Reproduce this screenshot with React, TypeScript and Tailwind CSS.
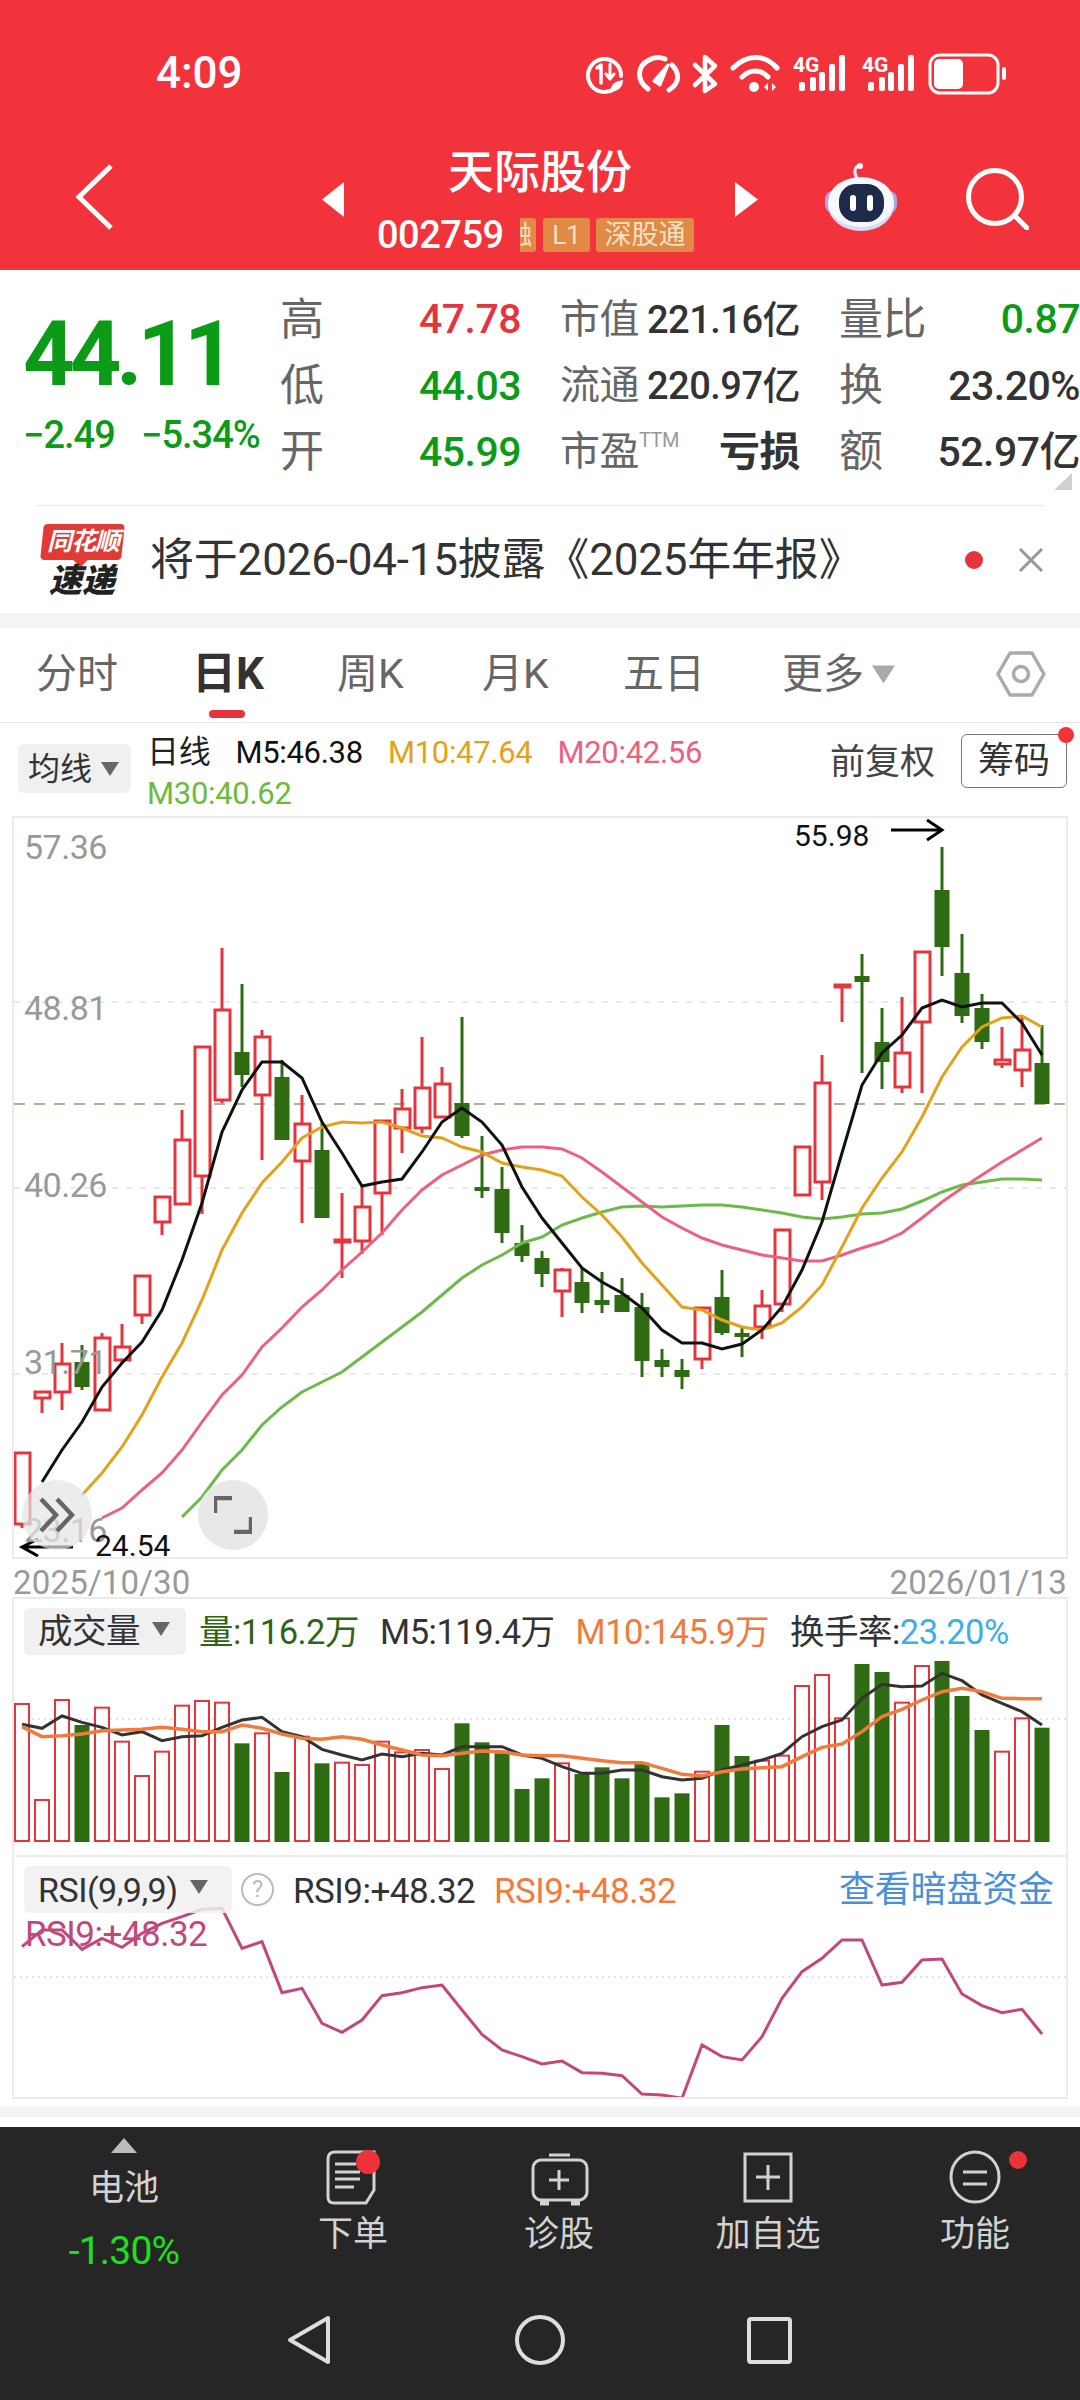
import React from "react";

const RED = "#e5343d";
const GREEN = "#2e6b13";

// [up?, wickTop, bodyTop, bodyBottom, wickBottom]
const candles: [number, number, number, number, number][] = [
  [1, 1453, 1453, 1524, 1528], [1, 1392, 1392, 1398, 1413], [1, 1343, 1364, 1392, 1410], [0, 1345, 1362, 1387, 1390],
  [1, 1333, 1338, 1410, 1410], [1, 1324, 1347, 1360, 1363], [1, 1276, 1276, 1315, 1324], [1, 1197, 1197, 1222, 1235],
  [1, 1110, 1140, 1204, 1204], [1, 1047, 1047, 1176, 1214], [1, 948, 1010, 1100, 1103], [0, 984, 1052, 1075, 1087],
  [1, 1030, 1037, 1095, 1160], [0, 1060, 1077, 1140, 1140], [1, 1095, 1124, 1161, 1223], [0, 1123, 1150, 1218, 1218],
  [1, 1193, 1240, 1242, 1278], [1, 1185, 1207, 1241, 1254], [1, 1121, 1121, 1193, 1235], [1, 1089, 1109, 1128, 1153],
  [1, 1037, 1088, 1128, 1133], [1, 1067, 1084, 1117, 1117], [0, 1017, 1103, 1136, 1138], [0, 1136, 1187, 1191, 1198],
  [0, 1167, 1189, 1233, 1243], [0, 1225, 1243, 1256, 1262], [0, 1251, 1258, 1274, 1287], [1, 1268, 1270, 1291, 1317],
  [0, 1268, 1282, 1303, 1313], [0, 1272, 1300, 1305, 1313], [0, 1278, 1295, 1312, 1312], [0, 1293, 1307, 1361, 1377],
  [0, 1349, 1360, 1367, 1377], [0, 1359, 1370, 1377, 1389], [1, 1308, 1308, 1359, 1369], [0, 1270, 1297, 1333, 1335],
  [0, 1328, 1333, 1337, 1357], [1, 1290, 1306, 1327, 1339], [1, 1230, 1230, 1304, 1312], [1, 1147, 1147, 1195, 1195],
  [1, 1055, 1083, 1182, 1200], [1, 985, 985, 987, 1022], [0, 954, 976, 982, 1073], [0, 1008, 1042, 1062, 1089],
  [1, 997, 1053, 1087, 1093], [1, 952, 952, 1022, 1093], [0, 847, 890, 947, 976], [0, 934, 973, 1016, 1023],
  [0, 994, 1008, 1042, 1049], [1, 1027, 1060, 1064, 1068], [1, 1015, 1050, 1070, 1087], [0, 1025, 1063, 1104, 1104],
];

const ma5 = [1482, 1450, 1422, 1387, 1363, 1342, 1310, 1260, 1203, 1132, 1090, 1062, 1062, 1078, 1122, 1153, 1186, 1182, 1179, 1152, 1122, 1108, 1122, 1145, 1187, 1218, 1243, 1268, 1282, 1293, 1308, 1330, 1343, 1343, 1349, 1344, 1330, 1307, 1270, 1222, 1153, 1085, 1053, 1035, 1008, 1000, 1007, 1003, 1003, 1023, 1055];
const ma10 = [1495, 1473, 1447, 1415, 1377, 1343, 1300, 1250, 1213, 1183, 1162, 1138, 1127, 1122, 1123, 1122, 1128, 1136, 1138, 1147, 1152, 1163, 1167, 1170, 1176, 1197, 1215, 1237, 1263, 1285, 1307, 1310, 1320, 1327, 1330, 1323, 1307, 1285, 1247, 1208, 1178, 1152, 1117, 1077, 1047, 1027, 1018, 1016, 1027];
const ma20 = [1518, 1508, 1490, 1473, 1450, 1422, 1395, 1375, 1347, 1328, 1307, 1290, 1270, 1252, 1233, 1210, 1190, 1175, 1165, 1155, 1150, 1147, 1147, 1149, 1158, 1172, 1187, 1202, 1217, 1228, 1238, 1245, 1250, 1255, 1258, 1261, 1261, 1255, 1248, 1242, 1233, 1218, 1202, 1188, 1175, 1162, 1150, 1138];
const ma30 = [1517, 1497, 1470, 1450, 1425, 1407, 1392, 1382, 1372, 1357, 1342, 1327, 1312, 1295, 1278, 1265, 1255, 1243, 1237, 1225, 1218, 1212, 1207, 1206, 1207, 1206, 1205, 1205, 1207, 1210, 1213, 1217, 1219, 1217, 1214, 1213, 1209, 1201, 1192, 1185, 1182, 1179, 1179, 1180];

// volume tops, measured on the crop (y = 1590 + v / 3), sign says up or down bar
const volumes = [342, 630, 330, -405, 353, 455, 558, 485, 347, 333, 338, -460, 430, -546, 440, -520, 518, 525, 455, 487, 480, 537, -400, -457, -490, -597, -565, 520, -552, -532, -565, -518, -622, -610, 545, -405, -498, 512, 497, 288, 255, 385, -222, -246, 338, 228, -213, -318, -420, 485, 385, -413];
const volM5 = [403, 415, 378, 397, 412, 435, 425, 452, 440, 437, 412, 390, 382, 425, 440, 478, 495, 510, 492, 500, 490, 495, 470, 470, 470, 495, 505, 530, 550, 550, 540, 540, 560, 570, 565, 540, 525, 510, 490, 440, 410, 390, 325, 283, 290, 288, 250, 272, 315, 340, 365, 405];
const volM10 = [410, 440, 437, 432, 422, 420, 418, 412, 418, 425, 425, 405, 415, 432, 445, 448, 440, 448, 465, 480, 495, 497, 490, 483, 485, 495, 497, 497, 505, 512, 518, 518, 535, 553, 558, 545, 537, 533, 530, 500, 472, 462, 425, 380, 358, 330, 305, 295, 305, 325, 326, 326];
const rsi = [290, 240, 240, 298, 265, 292, 250, 220, 200, 178, 175, 295, 275, 428, 415, 520, 547, 510, 437, 428, 413, 405, 480, 553, 600, 620, 642, 633, 668, 670, 677, 732, 735, 745, 585, 620, 630, 560, 445, 365, 325, 270, 270, 405, 397, 330, 327, 432, 467, 488, 478, 552];

const line = (start: number, ys: number[]) => ys.map((y, i) => `${22 + (start + i) * 20},${y}`).join(" ");

const Triangle = ({ className }: { className: string }) => (
  <svg viewBox="0 0 18 14" className={className}>
    <path d="M0 0H18L9 14Z" fill="currentColor" />
  </svg>
);

const StatusIcons = () => (
  <svg width={430} height={46} viewBox="580 50 430 46" fill="none" stroke="#fff" strokeLinecap="round" strokeLinejoin="round">
    {/* data saver */}
    <path d="M614 89A16.5 16.5 0 1 1 621 76" strokeWidth={4} />
    <path d="M597 68L601 65V83" strokeWidth={3.5} />
    <path d="M610 64V78M606 74L610 79L614 74" strokeWidth={3} />
    <path d="M611 91C610 84 616 81 623 80C623 87 618 92 611 91Z" fill="#fff" stroke="none" />
    {/* speed */}
    <path d="M648 89C636 80 637 66 649 60C654 57 660 57 665 59" strokeWidth={5} />
    <path d="M672 65C680 73 680 83 669 90" strokeWidth={5} />
    <path d="M654 81L668 65L660 85Z" fill="#fff" strokeWidth={3} />
    {/* bluetooth */}
    <path d="M695 65L715 84L705 91V57L715 66L695 85" strokeWidth={4.5} />
    {/* wifi */}
    <path d="M733 68C747 54 765 54 777 68" strokeWidth={5} />
    <path d="M742 77C750 69 761 69 768 77" strokeWidth={5} />
    <circle cx={754} cy={87} r={5} fill="#fff" stroke="none" />
    <path d="M768 83V91L764 87ZM772 83V91L776 87Z" fill="#fff" stroke="none" />
    {/* signal */}
    {[0, 69].map((dx) => (
      <g key={dx}>
        <text x={793 + dx} y={72} fontSize={21} fontWeight={700} fill="#fff" stroke="none" fontFamily="Roboto">4G</text>
        {[[802, 82], [813, 77], [822, 72], [832, 64], [842, 55]].map(([x, top]) => (
          <rect key={x} x={x - 3 + dx} y={top} width={6} height={91 - top} rx={2} fill="#fff" stroke="none" />
        ))}
      </g>
    ))}
    {/* battery */}
    <rect x={930} y={55} width={68} height={38} rx={10} strokeWidth={3} />
    <rect x={934} y={59} width={29} height={30} rx={5} fill="#fff" stroke="none" />
    <rect x={1002} y={67} width={4} height={13} rx={2} fill="#fff" stroke="none" />
  </svg>
);

const Robot = () => (
  <svg width={72} height={68} viewBox="825 163 72 68">
    <path d="M857 178C853 172 855 166 860 165" fill="none" stroke="#e8e6fb" strokeWidth={3} />
    <circle cx={860} cy={166} r={3} fill="#fff" />
    <rect x={825} y={191} width={72} height={22} rx={8} fill="#a9a6e4" />
    <ellipse cx={861} cy={205} rx={33} ry={26} fill="#d9d8f6" />
    <ellipse cx={861} cy={202} rx={33} ry={25} fill="#f7f7ff" />
    <rect x={839} y={184} width={45} height={38} rx={17} fill="#1d2a49" />
    <rect x={850} y={195} width={6} height={16} rx={3} fill="#fff" />
    <rect x={867} y={195} width={6} height={16} rx={3} fill="#fff" />
  </svg>
);

const App = () => {
  return (
    <div className="w-[1080px] h-[2400px] overflow-hidden bg-white text-[#333] [font-family:Roboto,'Noto_Sans_CJK_SC',sans-serif]">
      {/* red header */}
      <header className="h-[270px] bg-[#f3333c] text-white border-b border-[#d8434a]">
        <div className="h-[146px] flex items-center">
          <span className="ml-[156px] w-[424px] text-[44px] font-medium leading-none">4:09</span>
          <StatusIcons />
        </div>
        <div className="flex items-start">
          <svg width={40} height={70} viewBox="75 163 40 70" className="ml-[75px] mt-[17px]" fill="none" stroke="#fff" strokeWidth={5}>
            <path d="M111 166L79 197L111 228" />
          </svg>
          <svg width={22} height={35} viewBox="0 0 22 35" className="ml-[207px] mt-[36px]">
            <path d="M22 0V35L0 17.5Z" fill="#fff" />
          </svg>
          <div className="ml-[33px] w-[318px]">
            <div className="pl-[8px] mt-[1px] text-center text-[46px] leading-[50px] font-medium">天际股份</div>
            <div className="mt-[21px] flex items-center h-[34px]">
              <span className="text-[38px] leading-none font-medium w-[129px] tracking-[-0.5px]">002759</span>
              <span className="ml-[14px] w-[16px] h-[34px] overflow-hidden rounded-r-[3px] bg-[#e08a45] text-[#f7e0c5] text-[26px] leading-[34px]">
                <span className="block -ml-[14px]">融</span>
              </span>
              <span className="ml-[7px] w-[47px] h-[34px] rounded-[3px] bg-[#e08a45] text-[#f7e0c5] text-[26px] leading-[34px] text-center">L1</span>
              <span className="ml-[6px] w-[98px] h-[34px] rounded-[3px] bg-[#e08a45] text-[#f7e0c5] text-[27px] leading-[34px] text-center">深股通</span>
            </div>
          </div>
          <svg width={23} height={35} viewBox="0 0 23 35" className="ml-[40px] mt-[36px]">
            <path d="M0 0V35L23 17.5Z" fill="#fff" />
          </svg>
          <div className="ml-[67px] mt-[17px]"><Robot /></div>
          <svg width={64} height={62} viewBox="964 168 64 62" className="ml-[68px] mt-[22px]" fill="none" stroke="#fff" strokeWidth={5}>
            <circle cx={994} cy={197} r={26.5} />
            <path d="M1014 216L1026 228" strokeLinecap="round" />
          </svg>
        </div>
      </header>

      {/* quote */}
      <section className="relative h-[235px] flex">
        <div className="ml-[23px] w-[258px] text-[#0c9b16]">
          <div className="mt-[40px] text-[90px] leading-[90px] font-bold tracking-[-5px]">44.11</div>
          <div className="mt-[17px] flex text-[38px] leading-[36px] font-medium tracking-[-1px]">
            <span className="w-[118px]">−2.49</span>
            <span>−5.34%</span>
          </div>
        </div>
        <div className="pt-[16px] w-[799px] grid grid-cols-[240px_240px_241px] gap-x-[39px] grid-rows-[67px_66px_66px] items-center text-[41px] leading-none font-medium tracking-[-0.5px]">
          <div className="flex justify-between items-center"><span className="text-[#666] font-normal text-[44px] -ml-[1px]">高</span><span className="text-[#e5343d]">47.78</span></div>
          <div className="flex justify-between items-center"><span className="text-[#666] font-normal text-[40px]">市值</span><span className="text-[38px]">221.16亿</span></div>
          <div className="flex justify-between items-center"><span className="text-[#666] font-normal text-[44px]">量比</span><span className="text-[#0c9b16]">0.87</span></div>
          <div className="flex justify-between items-center"><span className="text-[#666] font-normal text-[44px] -ml-[1px]">低</span><span className="text-[#0c9b16]">44.03</span></div>
          <div className="flex justify-between items-center"><span className="text-[#666] font-normal text-[40px]">流通</span><span className="text-[38px]">220.97亿</span></div>
          <div className="flex justify-between items-center"><span className="text-[#666] font-normal text-[44px]">换</span><span>23.20%</span></div>
          <div className="flex justify-between items-center"><span className="text-[#666] font-normal text-[44px] -ml-[1px]">开</span><span className="text-[#0c9b16]">45.99</span></div>
          <div className="flex justify-between items-center">
            <span className="flex items-start text-[#666] font-normal text-[40px]">市盈<span className="text-[20px] text-[#999] mt-[-2px]">TTM</span></span>
            <span className="text-[41px] font-semibold">亏损</span>
          </div>
          <div className="flex justify-between items-center"><span className="text-[#666] font-normal text-[44px]">额</span><span>52.97亿</span></div>
        </div>
        <svg width={18} height={17} viewBox="0 0 18 17" className="absolute left-[1054px] top-[203px]">
          <path d="M18 0V17H0Z" fill="#d0d0d0" />
        </svg>
      </section>
      <div className="mx-[36px] h-px bg-[#eaeaea]" />

      {/* notice */}
      <section className="h-[107px] flex items-center">
        <div className="relative ml-[38px] w-[88px] h-[72px] shrink-0">
          <div className="absolute left-[4px] top-0 w-[81px] h-[36px] bg-[#e23b36] rounded-[4px] -skew-x-6" />
          <div className="absolute left-[37px] top-[30px] w-[11px] h-[11px] bg-[#e23b36] rotate-45" />
          <div className="absolute left-[6px] top-0 w-[78px] h-[36px] text-center text-white text-[25px] leading-[36px] font-bold italic tracking-[-1px]">同花顺</div>
          <div className="absolute left-[7px] top-[40px] w-[74px] text-center text-[#222] text-[33px] leading-[33px] font-black italic">速递</div>
        </div>
        <div className="ml-[24px] w-[815px] text-[44px] leading-none tracking-[-0.2px] whitespace-nowrap">将于2026-04-15披露《2025年年报》</div>
        <div className="w-[18px] h-[18px] rounded-full bg-[#e5343d] shrink-0" />
        <svg width={26} height={24} viewBox="0 0 26 24" className="ml-[35px] shrink-0" fill="none" stroke="#999" strokeWidth={3}>
          <path d="M2 1L24 23M24 1L2 23" />
        </svg>
      </section>
      <div className="h-[15px] bg-[#f4f4f4]" />

      {/* tabs */}
      <nav className="h-[95px] border-b border-[#e4e4e4] flex items-center pl-[36px] pb-[2px] text-[41px] leading-none text-[#666]">
        <span className="w-[156px]">分时</span>
        <span className="relative w-[145px] text-[44px] font-bold text-[#333]">
          日K
          <span className="absolute left-[17px] top-[58px] w-[36px] h-[8px] rounded-full bg-[#e5343d]" />
        </span>
        <span className="w-[145px]">周K</span>
        <span className="w-[141px]">月K</span>
        <span className="w-[159px]">五日</span>
        <span className="w-[214px] flex items-center">更多<Triangle className="ml-[8px] w-[23px] h-[19px] text-[#aaa]" /></span>
        <svg width={50} height={46} viewBox="0 0 50 46" fill="none" stroke="#aaa" strokeWidth={3.5}>
          <path d="M14 2H36L48 23L36 44H14L2 23Z" strokeLinejoin="round" />
          <circle cx={25} cy={23} r={7.5} />
        </svg>
      </nav>

      {/* MA legend */}
      <section className="h-[93px] flex items-start">
        <div className="ml-[18px] mt-[21px] w-[113px] h-[49px] rounded-[6px] bg-[#f0f0f0] flex items-center pl-[10px] text-[32px] leading-none">
          均线<Triangle className="ml-[9px] w-[18px] h-[14px] text-[#666]" />
        </div>
        <div className="ml-[16px] mt-[9px] w-[683px] text-[31px] leading-[41px] tracking-[-0.3px]">
          <div className="flex gap-[25px]">
            <span className="text-[#222] text-[32px]">日线</span>
            <span className="text-[#111]">M5:46.38</span>
            <span className="text-[#e5a11a]">M10:47.64</span>
            <span className="text-[#ec6180]">M20:42.56</span>
          </div>
          <div className="text-[#6cbb3c]">M30:40.62</div>
        </div>
        <span className="mt-[21px] w-[131px] text-[35px] leading-[38px] text-[#444]">前复权</span>
        <div className="relative mt-[11px] w-[106px] h-[54px] rounded-[6px] border border-[#777] text-[36px] leading-[52px] text-center">
          筹码
          <span className="absolute right-[-8px] top-[-8px] w-[16px] h-[16px] rounded-full bg-[#f3333c]" />
        </div>
      </section>

      {/* k-line chart */}
      <section className="relative ml-[12px] w-[1056px] h-[743px] border-2 border-[#ebebeb]">
        <svg width={1052} height={739} viewBox="14 818 1052 739" className="block" fill="none">
          {[1002, 1188, 1374].map((y) => (
            <line key={y} x1={14} x2={1066} y1={y} y2={y} stroke="#e9e9e9" strokeWidth={2} strokeDasharray="6 8" />
          ))}
          <line x1={14} x2={1066} y1={1104} y2={1104} stroke="#b5ac8f" strokeWidth={2} strokeDasharray="11 9" />
          {candles.map(([up, wt, bt, bb, wb], i) => {
            const x = 22 + i * 20;
            const color = up ? RED : GREEN;
            return (
              <g key={i}>
                <line x1={x} x2={x} y1={wt} y2={wb} stroke={color} strokeWidth={3} />
                {up ? (
                  <rect x={x - 7} y={bt} width={15} height={bb - bt} fill="#fff" stroke={color} strokeWidth={3} />
                ) : (
                  <rect x={x - 7.5} y={bt} width={15} height={bb - bt} fill={color} />
                )}
              </g>
            );
          })}
          <polyline points={line(8, ma30)} stroke="#6cbb4a" strokeWidth={3} />
          <polyline points={line(4, ma20)} stroke="#ec6180" strokeWidth={3} />
          <polyline points={line(3, ma10)} stroke="#e5a11a" strokeWidth={3} />
          <polyline points={line(1, ma5)} stroke="#111" strokeWidth={3} />
          <path d="M891 830H942M927 820L942 830L927 840" stroke="#000" strokeWidth={3} />
          <path d="M73 1547H22M38 1539L22 1547L38 1556" stroke="#000" strokeWidth={3} />
        </svg>
        <span className="absolute left-[10px] top-[11px] text-[34px] leading-[36px] text-[#999] tracking-[-0.5px]">57.36</span>
        <span className="absolute left-[10px] top-[172px] text-[34px] leading-[36px] text-[#999] tracking-[-0.5px]">48.81</span>
        <span className="absolute left-[10px] top-[349px] text-[34px] leading-[36px] text-[#999] tracking-[-0.5px]">40.26</span>
        <span className="absolute left-[10px] top-[526px] text-[34px] leading-[36px] text-[#999] tracking-[-0.5px]">31.71</span>
        <span className="absolute left-[10px] top-[694px] text-[34px] leading-[36px] text-[#999] tracking-[-0.5px]">23.16</span>
        <span className="absolute left-[780px] top-[3px] text-[30px] leading-[30px] text-[#111]">55.98</span>
        <span className="absolute left-[81px] top-[713px] text-[30px] leading-[30px] text-[#111]">24.54</span>
        <div className="absolute left-[8px] top-[662px] w-[70px] h-[70px] rounded-full bg-[#e4e4e4]/70 flex items-center justify-center">
          <svg width={36} height={36} viewBox="0 0 36 36" fill="none" stroke="#666" strokeWidth={4.5}>
            <path d="M2 2L17 18L2 34M18 2L33 18L18 34" />
          </svg>
        </div>
        <div className="absolute left-[184px] top-[662px] w-[70px] h-[70px] rounded-full bg-[#e8e8e8] flex items-center justify-center">
          <svg width={38} height={38} viewBox="0 0 38 38" fill="none" stroke="#666" strokeWidth={4.5}>
            <path d="M1 17V2H18M37 21V36H20" />
          </svg>
        </div>
      </section>
      <div className="h-[38px] mx-[13px] pt-[9px] flex justify-between items-center text-[33px] leading-none text-[#999] tracking-[0.2px]">
        <span>2025/10/30</span>
        <span>2026/01/13</span>
      </div>

      {/* volume */}
      <section className="ml-[12px] w-[1056px] h-[258px] border-x-2 border-t-2 border-[#ebebeb]">
        <div className="h-[59px] flex items-start text-[34.5px] leading-none tracking-[-0.5px]">
          <div className="ml-[10px] mt-[9px] w-[162px] h-[47px] rounded-[6px] bg-[#f0f0f0] flex items-center pl-[14px]">
            成交量<Triangle className="ml-[12px] w-[18px] h-[14px] text-[#666] -mt-[6px]" />
          </div>
          <div className="ml-[13px] mt-[16px] flex gap-[21px]">
            <span className="text-[#2f6512]">量:116.2万</span>
            <span>M5:119.4万</span>
            <span className="text-[#f07b3c]">M10:145.9万</span>
            <span>换手率:<span className="text-[#3daee9]">23.20%</span></span>
          </div>
        </div>
        <svg width={1052} height={192} viewBox="14 1658 1052 192" className="block" fill="none">
          <line x1={14} x2={1066} y1={1719} y2={1719} stroke="#e4e4e4" strokeWidth={2} strokeDasharray="2 4" />
          {volumes.map((v, i) => {
            const x = 22 + i * 20;
            const top = 1590 + Math.abs(v) / 3;
            return v > 0 ? (
              <rect key={i} x={x - 7} y={top} width={14} height={1841 - top} fill="#fff" stroke={RED} strokeWidth={2} />
            ) : (
              <rect key={i} x={x - 7.5} y={top} width={15} height={1842 - top} fill={GREEN} />
            );
          })}
          <polyline points={volM5.map((v, i) => `${22 + i * 20},${1590 + v / 3}`).join(" ")} stroke="#333" strokeWidth={3} />
          <polyline points={volM10.map((v, i) => `${22 + i * 20},${1590 + v / 3}`).join(" ")} stroke="#f07b3c" strokeWidth={3.5} />
        </svg>
      </section>

      {/* rsi */}
      <section className="relative ml-[12px] w-[1056px] h-[244px] border-2 border-[#ebebeb]">
        <svg width={1052} height={240} viewBox="14 1857 1052 240" className="block" fill="none">
          <line x1={14} x2={1066} y1={1977} y2={1977} stroke="#e4e4e4" strokeWidth={2} strokeDasharray="2 4" />
          <polyline points={rsi.map((v, i) => `${22 + i * 20},${1850 + v / 3}`).join(" ")} stroke="#c2477b" strokeWidth={3} />
        </svg>
        <div className="absolute left-[10px] top-[9px] w-[1034px] flex items-start text-[35px] leading-none tracking-[-0.5px]">
          <div className="w-[208px] h-[47px] rounded-[6px] bg-[#f0f0f0]/85 flex items-center pl-[14px] text-[34px]">
            RSI(9,9,9)<Triangle className="ml-[12px] w-[18px] h-[14px] text-[#666] -mt-[6px]" />
          </div>
          <div className="ml-[9px] mt-[7px] w-[33px] h-[33px] rounded-full border-2 border-[#bbb] text-[24px] leading-[29px] text-center text-[#bbb]">?</div>
          <span className="ml-[19px] mt-[8px] w-[201px]">RSI9:+48.32</span>
          <span className="mt-[8px] w-[345px] text-[#f07b3c]">RSI9:+48.32</span>
          <span className="mt-[6px] text-[36px] text-[#4a90d9] tracking-[-0.2px]">查看暗盘资金</span>
        </div>
        <span className="absolute left-[11px] top-[60px] text-[35px] leading-none tracking-[-0.5px] text-[#c2477b]">RSI9:+48.32</span>
      </section>
      <div className="h-[7px]" />
      <div className="h-[11px] bg-[#f4f4f4]" />
      <div className="h-[10px]" />

      {/* bottom bar */}
      <footer className="h-[273px] bg-[#262626] text-[#d2d2d2]">
        <div className="h-[173px] flex items-start text-center text-[35px] leading-[40px]">
          <div className="w-[248px] flex flex-col items-center">
            <svg width={26} height={15} viewBox="0 0 26 15" className="mt-[11px]"><path d="M13 0L26 15H0Z" fill="#bbb" /></svg>
            <span className="mt-[16px]">电池</span>
            <span className="mt-[22px] text-[39px] text-[#1fe01f] tracking-[-0.8px]">-1.30%</span>
          </div>
          <div className="w-[210px] flex flex-col items-center pt-[21px]">
            <svg width={60} height={60} viewBox="325 2148 60 60" fill="none" stroke="#d2d2d2" strokeWidth={3}>
              <path d="M337 2152H376V2190L368 2203H336Q330 2203 330 2197V2159Q330 2152 337 2152Z" />
              <path d="M337 2164H358M337 2172H362M337 2179H362M337 2187H356" />
              <circle cx={370} cy={2162} r={12} fill="#ee3338" stroke="none" />
            </svg>
            <span className="mt-[7px]">下单</span>
          </div>
          <div className="w-[202px] flex flex-col items-center pt-[21px]">
            <svg width={60} height={60} viewBox="529 2148 60 60" fill="none" stroke="#d2d2d2" strokeWidth={3}>
              <path d="M549 2155H570" />
              <rect x={533} y={2160} width={54} height={40} rx={8} />
              <path d="M559 2170V2190M549 2180H569" />
              <path d="M540 2203H549M571 2203H580" strokeWidth={5} />
            </svg>
            <span className="mt-[7px]">诊股</span>
          </div>
          <div className="w-[216px] flex flex-col items-center pt-[21px]">
            <svg width={60} height={60} viewBox="738 2148 60 60" fill="none" stroke="#d2d2d2" strokeWidth={3}>
              <rect x={745} y={2154} width={46} height={47} />
              <path d="M768 2165V2190M756 2177H780" />
            </svg>
            <span className="mt-[7px]">加自选</span>
          </div>
          <div className="w-[198px] flex flex-col items-center pt-[21px]">
            <svg width={90} height={60} viewBox="945 2148 90 60" fill="none" stroke="#d2d2d2" strokeWidth={3} className="-mr-[30px]">
              <ellipse cx={975} cy={2177} rx={24} ry={25} />
              <path d="M963 2172H987M963 2184H987" />
              <circle cx={1018} cy={2160} r={9} fill="#ee3338" stroke="none" />
            </svg>
            <span className="mt-[7px]">功能</span>
          </div>
        </div>
        <div className="flex pt-[12px]">
          <svg width={50} height={56} viewBox="284 2312 50 56" className="ml-[284px]" fill="none" stroke="#ddd" strokeWidth={4} strokeLinejoin="round">
            <path d="M328 2318V2362L290 2340Z" />
          </svg>
          <svg width={56} height={56} viewBox="512 2312 56 56" className="ml-[178px]" fill="none" stroke="#ddd" strokeWidth={4}>
            <circle cx={540} cy={2340} r={23} />
          </svg>
          <svg width={52} height={56} viewBox="743 2312 52 56" className="ml-[175px]" fill="none" stroke="#ddd" strokeWidth={4}>
            <rect x={749} y={2319} width={41} height={43} rx={2} />
          </svg>
        </div>
      </footer>
    </div>
  );
};

export default App;
